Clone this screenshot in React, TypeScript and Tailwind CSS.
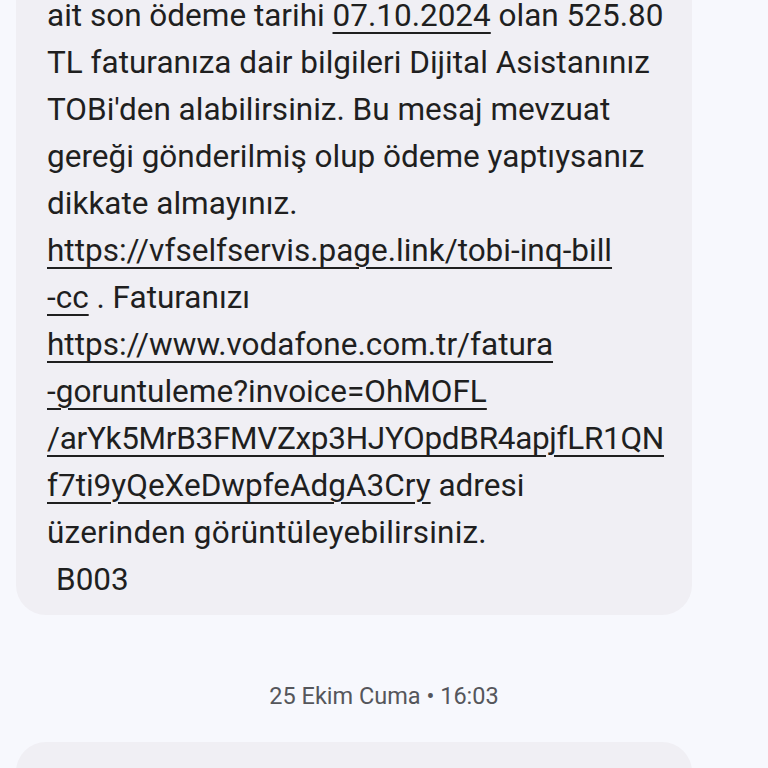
import React from 'react';

const Link: React.FC<{ children: React.ReactNode }> = ({ children }) => (
  <span className="underline decoration-2 underline-offset-[6px]">{children}</span>
);

export default function App() {
  return (
    <div
      className="w-[768px] h-[768px] overflow-hidden bg-[#f7f8fd] text-[#1f1f1f]"
      style={{ fontFamily: 'Roboto, "Noto Sans", sans-serif' }}
    >
      {/* Message bubble */}
      <div className="ml-[16px] w-[676px] -mt-[40px] rounded-[30px] bg-[#f0eff4] pl-[31px] pt-[32px] pb-[12px]">
        <div className="text-[31.5px] leading-[47px] whitespace-nowrap">
          <div>ait son ödeme tarihi <Link>07.10.2024</Link> olan 525.80</div>
          <div>TL faturanıza dair bilgileri Dijital Asistanınız</div>
          <div>TOBi'den alabilirsiniz. Bu mesaj mevzuat</div>
          <div>gereği gönderilmiş olup ödeme yaptıysanız</div>
          <div>dikkate almayınız.</div>
          <div><Link>https://vfselfservis.page.link/tobi-inq-bill</Link></div>
          <div><Link>-cc</Link> . Faturanızı</div>
          <div><Link>https://www.vodafone.com.tr/fatura</Link></div>
          <div><Link>-goruntuleme?invoice=OhMOFL</Link></div>
          <div className="tracking-[-0.3px]"><Link>/arYk5MrB3FMVZxp3HJYOpdBR4apjfLR1QN</Link></div>
          <div><Link>f7ti9yQeXeDwpfeAdgA3Cry</Link> adresi</div>
          <div className="tracking-[0.2px]">üzerinden görüntüleyebilirsiniz.</div>
          <div className="pl-[9px]">B003</div>
        </div>
      </div>

      {/* Date separator */}
      <div className="mt-[66px] text-center text-[23.5px] leading-[30px] text-[#55565b]">
        25 Ekim Cuma • 16:03
      </div>

      {/* Next bubble (cut off) */}
      <div className="ml-[16px] mt-[31px] w-[676px] h-[120px] rounded-[30px] bg-[#f0eff4]" />
    </div>
  );
}
